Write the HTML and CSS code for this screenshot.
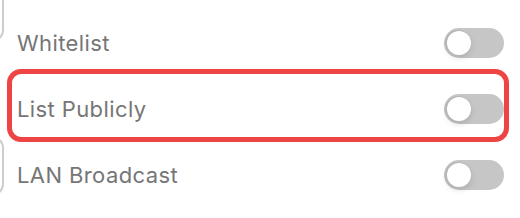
FILE: index.html
```html
<!DOCTYPE html>
<html lang="en">
<head>
    <meta charset="UTF-8">
    <meta name="viewport" content="width=device-width, initial-scale=1.0">
    <title>Server Settings</title>
    <link rel="stylesheet" href="styles.css">
</head>
<body>
    <div class="page">
        <div class="rail">
            <div class="rail-card rail-card-top"></div>
            <div class="rail-card rail-card-bottom"></div>
        </div>
        <div class="settings">
            <div class="setting-row">
                <span class="setting-label">Whitelist</span>
                <label class="toggle"><input type="checkbox"><span class="knob"></span></label>
            </div>
            <div class="setting-row highlighted">
                <span class="setting-label">List Publicly</span>
                <label class="toggle"><input type="checkbox"><span class="knob"></span></label>
                <div class="highlight"></div>
            </div>
            <div class="setting-row">
                <span class="setting-label">LAN Broadcast</span>
                <label class="toggle"><input type="checkbox"><span class="knob"></span></label>
            </div>
        </div>
    </div>
</body>
</html>
```

FILE: styles.css
```css
body {
    margin: 0;
    padding: 0;
    background-color: #ffffff;
    font-family: Inter, "Noto Sans", sans-serif;
    overflow: hidden;
}

.page {
    display: flex;
    height: 218px;
}

.rail {
    width: 5px;
    overflow: hidden;
    flex-shrink: 0;
}

.rail-card {
    width: 44px;
    margin-left: -40px;
    border: 2px solid #cdcdcd;
    border-radius: 12px;
    box-sizing: border-box;
}

.rail-card-top {
    height: 62px;
    margin-top: -20px;
}

.rail-card-bottom {
    height: 60px;
    margin-top: 94px;
}

.settings {
    flex: 1;
    padding-top: 10px;
}

.setting-row {
    position: relative;
    display: flex;
    align-items: center;
    justify-content: space-between;
    height: 66px;
    padding: 0 16px 0 12px;
}

.setting-label {
    font-size: 22px;
    font-weight: 400;
    color: #767676;
    letter-spacing: 0.4px;
}

.toggle {
    position: relative;
    display: inline-block;
    width: 60px;
    height: 30px;
    border-radius: 15px;
    background-color: #c6c6c6;
    cursor: pointer;
}

.toggle input {
    display: none;
}

.knob {
    position: absolute;
    top: 3px;
    left: 3px;
    width: 24px;
    height: 24px;
    border-radius: 50%;
    background-color: #ffffff;
    box-shadow: -1px 0 0 1px #b6b6b6, 0 3px 6px rgba(0, 0, 0, 0.12);
}

.highlight {
    position: absolute;
    top: -7px;
    bottom: 0;
    left: 2px;
    right: 11px;
    border: 5px solid #ef4444;
    border-radius: 14px;
    pointer-events: none;
}
```
